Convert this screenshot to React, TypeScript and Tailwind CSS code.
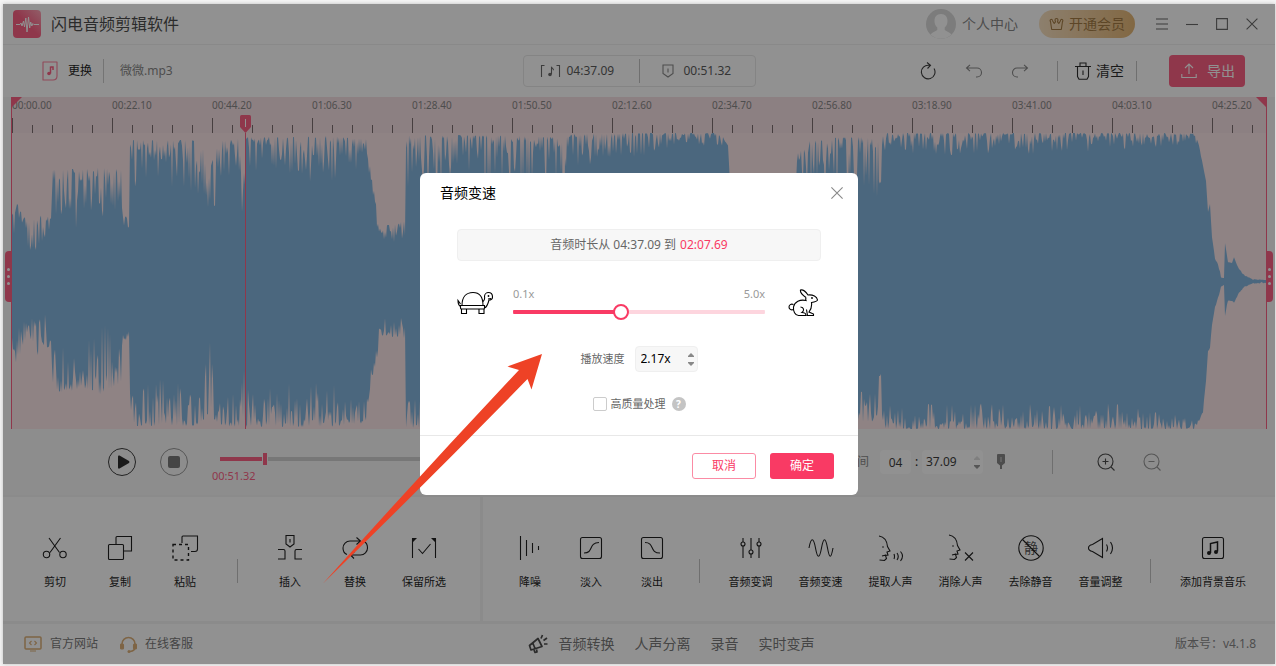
import { useState, type ReactNode } from 'react'

const TIMES = [
  '00:00.00', '00:22.10', '00:44.20', '01:06.30', '01:28.40', '01:50.50', '02:12.60',
  '02:34.70', '02:56.80', '03:18.90', '03:41.00', '04:03.10', '04:25.20',
]

const PLAYHEAD = 51.32
const PX_PER_SECOND = 100 / 22.1

// x, top, bottom, jitter of the top edge, jitter of the bottom edge
const ENVELOPE: [number, number, number, number, number][] = [
  [0, 82, 212, 22, 40],
  [4, 68, 232, 34, 40],
  [16, 90, 200, 24, 24],
  [26, 82, 222, 26, 40],
  [39, 84, 212, 14, 16],
  [41, 36, 262, 34, 36],
  [70, 36, 256, 50, 44],
  [90, 34, 262, 50, 56],
  [109, 36, 250, 36, 36],
  [111, 84, 208, 10, 10],
  [117, 82, 206, 10, 8],
  [118, 7, 293, 36, 32],
  [180, 7, 293, 44, 44],
  [190, 12, 290, 38, 32],
  [197, 34, 280, 60, 60],
  [208, 8, 293, 30, 34],
  [228, 5, 294, 30, 32],
  [231, 20, 290, 70, 50],
  [234, 4, 294, 28, 34],
  [318, 3, 294, 38, 36],
  [354, 6, 290, 22, 24],
  [358, 32, 256, 28, 28],
  [364, 70, 232, 20, 18],
  [368, 94, 202, 16, 16],
  [393, 88, 206, 24, 24],
  [394, 2, 295, 44, 26],
  [472, 2, 295, 50, 28],
  [546, 4, 293, 46, 26],
  [550, 8, 292, 40, 28],
  [551, 96, 200, 8, 8],
  [552, 96, 200, 8, 8],
  [553, 1, 295, 26, 20],
  [620, 0, 295, 22, 16],
  [655, 0, 295, 12, 12],
  [708, 0, 295, 10, 12],
  [716, 10, 286, 6, 8],
  [718, 50, 240, 10, 10],
  [722, 104, 190, 8, 8],
  [782, 104, 190, 8, 8],
  [785, 10, 286, 30, 26],
  [826, 4, 292, 50, 30],
  [866, 4, 288, 46, 30],
  [867, 46, 244, 20, 14],
  [869, 50, 242, 10, 8],
  [870, 0, 296, 18, 18],
  [960, 0, 296, 17, 20],
  [1100, 0, 296, 15, 20],
  [1183, 0, 296, 8, 10],
  [1187, 12, 288, 1, 2],
  [1191, 32, 280, 2, 2],
  [1194, 48, 248, 2, 2],
  [1196, 79, 218, 1, 2],
  [1198, 71, 216, 1, 2],
  [1200, 104, 192, 1, 1],
  [1203, 125, 175, 1, 2],
  [1207, 133, 162, 3, 2],
  [1209, 144, 154, 1, 1],
  [1212, 145, 152, 0, 0],
  [1213, 110, 183, 0, 0],
  [1216, 129, 168, 2, 2],
  [1220, 130, 168, 1, 1],
  [1222, 124, 170, 1, 2],
  [1227, 136, 160, 1, 1],
  [1233, 142, 154, 1, 1],
  [1240, 146, 151, 1, 1],
  [1254, 147, 150, 0, 1],
]

function wavePath() {
  let seed = 11
  const rand = () => {
    seed = (seed * 16807) % 2147483647
    return seed / 2147483647
  }
  const top: string[] = []
  const bottom: string[] = []
  for (let i = 0; i < ENVELOPE.length - 1; i++) {
    const a = ENVELOPE[i]
    const b = ENVELOPE[i + 1]
    for (let x = a[0]; x < b[0]; x++) {
      const k = (x - a[0]) / (b[0] - a[0])
      const at = (n: number) => a[n] + (b[n] - a[n]) * k
      const up = at(1) + at(3) * 1.3 * rand() ** 2.4
      const down = at(2) - at(4) * 1.3 * rand() ** 2.4
      top.push(`${x} ${up.toFixed(1)}`)
      bottom.unshift(`${x} ${down.toFixed(1)}`)
    }
  }
  return `M${top.join('L')}L1254 147L1254 150L${bottom.join('L')}Z`
}

const WAVE = wavePath()

function Icon({ w = 28, h = 28, className = '', children }: { w?: number; h?: number; className?: string; children: ReactNode }) {
  return (
    <svg
      width={w}
      height={h}
      viewBox={`0 0 ${w} ${h}`}
      fill="none"
      stroke="currentColor"
      strokeWidth="1.1"
      aria-hidden="true"
      className={`shrink-0 ${className}`}
    >
      {children}
    </svg>
  )
}

function Tool({ label, width = 'w-16', children }: { label: string; width?: string; children: ReactNode }) {
  return (
    <button className={`flex shrink-0 flex-col items-center gap-2 whitespace-nowrap text-[11px] leading-4 text-black ${width}`}>
      <Icon w={28} h={28}>{children}</Icon>
      <span className="pt-1">{label}</span>
    </button>
  )
}

function Steps({ small = false }: { small?: boolean }) {
  return (
    <span className="flex flex-col gap-[5px] text-[#888]">
      <button aria-label="增加" className={small ? 'opacity-30' : ''}>
        <svg width="6" height="4" viewBox="0 0 6 4" fill="currentColor"><path d="M3 0 6 3V4H0V3Z" /></svg>
      </button>
      <button aria-label="减少">
        <svg width="6" height="4" viewBox="0 0 6 4" fill="currentColor"><path d="M3 4 6 1V0H0V1Z" /></svg>
      </button>
    </span>
  )
}

function TitleBar() {
  return (
    <header className="flex h-[41px] items-center border-b border-[#efefef] pl-[10px] pr-[17px]">
      <svg width="28" height="28" viewBox="0 0 28 28" aria-hidden="true">
        <defs>
          <linearGradient id="logo" x1="1" y1="0" x2="0" y2="1">
            <stop offset="0" stopColor="#ff98ac" />
            <stop offset="0.5" stopColor="#fb4a73" />
          </linearGradient>
        </defs>
        <rect width="28" height="28" rx="4" fill="url(#logo)" />
        <path d="M3 14.5h4l1-1.5 1 3 1.5-5 1 6 1.3-9 1.2 14 1.5-15 1.2 11 1-6 1.1 4 1-2.5 1 1H26" fill="none" stroke="#fff" strokeWidth="1" />
      </svg>
      <h1 className="ml-[10px] text-base leading-6 text-[#333]">闪电音频剪辑软件</h1>
      <div className="ml-auto flex items-center">
        <a href="#user" className="flex items-center gap-[6px] text-sm text-[#777]">
          <svg width="30" height="30" viewBox="0 0 30 30" aria-hidden="true">
            <circle cx="15" cy="15" r="15" fill="#d4d4d4" />
            <path d="M15 5c4.500 0 6.500 3 6.500 7 0 3-1 5-2.800 6.500v2.500c2 1.500 5 2 6.800 4.500A15 15 0 0 1 4.500 25.500c1.800-2.500 4.800-3 6.800-4.500v-2.500C9.500 17 8.500 15 8.500 12c0-4 2-7 6.500-7Z" fill="#fff" />
          </svg>
          个人中心
        </a>
        <button className="ml-[21px] flex h-7 items-center gap-[5px] rounded-full bg-linear-to-r from-[#f6dcb8] to-[#e0ac62] px-[10px] text-sm text-[#96692a]">
          <Icon w={15} h={14}>
            <path d="M3.500 3.800 5.200 6.500 6.500 5 6 3a1.500 1.500 0 1 1 3 0L8.500 5l1.300 1.500 1.700-2.700a1.200 1.200 0 1 1 2 .7L12.300 12.500H2.700L1.500 4.500a1.200 1.200 0 1 1 2-.7" strokeLinejoin="round" />
          </Icon>
          开通会员
        </button>
        <div className="ml-[21px] flex items-center gap-[18px] text-[#555]">
          <button aria-label="菜单"><Icon w={12} h={12}><path d="M0 1h12M0 6h12M0 11h12" /></Icon></button>
          <button aria-label="最小化"><Icon w={12} h={12}><path d="M0 6.500h12" /></Icon></button>
          <button aria-label="最大化"><Icon w={12} h={12}><path d="M.6.6h10.800v10.800H.6z" /></Icon></button>
          <button aria-label="关闭"><Icon w={12} h={12}><path d="m.6.6 10.800 10.800m0-10.800L.6 11.400" /></Icon></button>
        </div>
      </div>
    </header>
  )
}

function Toolbar() {
  return (
    <div className="grid h-[52px] grid-cols-[1fr_auto_1fr] items-center">
      <div className="flex items-center pl-[39px] text-xs">
        <button className="flex items-center gap-[10px] text-black">
          <Icon w={16} h={20} className="text-[#fb4a73]">
            <path d="M1 1h14v14q0 4-4 4H1z" strokeLinejoin="round" opacity=".8" />
            <path d="M8.500 12.500V5.500M8.500 6h2.500v3" strokeWidth="1.500" />
            <circle cx="7" cy="12.500" r="1.800" fill="currentColor" stroke="none" />
          </Icon>
          更换
        </button>
        <span className="ml-[11px] mr-4 h-6 w-px bg-[#c4c4c4]" />
        <span className="text-[#777]">微微.mp3</span>
      </div>

      <div className="flex h-8 items-center rounded border border-[#e4e4e4] text-xs text-[#444]">
        <span className="flex w-[115px] items-center gap-[6px] pl-4">
          <Icon w={21} h={14} className="text-[#555]">
            <path d="M1.500 13V1M1.500 1.500h3M19.500 13V1M19.500 1.500h-3" />
            <path d="M11.500 10V3.500c1 1 2 1 2 2.800" />
            <circle cx="10" cy="10.500" r="1.800" fill="currentColor" stroke="none" />
          </Icon>
          04:37.09
        </span>
        <span className="h-6 w-px bg-[#bbb]" />
        <span className="flex w-[115px] items-center gap-[10px] pl-[22px]">
          <Icon w={12} h={14} className="text-[#777]">
            <path d="M1 1h10v8.500L6 13 1 9.500ZM6 4.500v4" />
          </Icon>
          00:51.32
        </span>
      </div>

      <div className="flex items-center justify-end pr-[30px] text-sm">
        <button aria-label="重置" className="mr-[29px]">
          <Icon w={16} h={18} className="text-[#222]">
            <path d="M14 6.500A6.800 6.800 0 1 1 9 3.300h1M7 .5l3.500 2.800L7.500 6.500" />
          </Icon>
        </button>
        <button aria-label="撤销" className="mr-7">
          <Icon w={18} h={14} className="text-[#777]">
            <path d="M5 .8 1.500 4 5 7.200M1.500 4H12a4.500 4.500 0 0 1 0 9h-1" />
          </Icon>
        </button>
        <button aria-label="重做" className="mr-7">
          <Icon w={18} h={14} className="text-[#777]">
            <path d="m13 .8 3.500 3.200L13 7.200M16.500 4H6a4.500 4.500 0 0 0 0 9h1" />
          </Icon>
        </button>
        <span className="h-5 w-px bg-[#bbb]" />
        <button className="mx-3 ml-[17px] flex items-center gap-[5px] text-[#111]">
          <Icon w={16} h={18}>
            <path d="M0 4.500h16M5 4V1h6v3M2.500 5v9.500l1.500 2.800h8l1.500-2.800V5M8 8.500v4.500" />
          </Icon>
          清空
        </button>
        <span className="h-5 w-px bg-[#bbb]" />
        <button className="ml-8 flex h-8 w-[76px] items-center justify-center gap-[10px] rounded bg-[#fb4a73] pl-[2px] text-white">
          <Icon w={16} h={16}>
            <path d="M8 11V1.500M4 5l4-4 4 4M.8 11v3.500h14.400V11" />
          </Icon>
          导出
        </button>
      </div>
    </div>
  )
}

function Handle({ side }: { side: string }) {
  return (
    <span className={`absolute top-[154px] flex h-[51px] w-[7px] flex-col items-center justify-center gap-1 bg-[#fb4a73] ${side}`}>
      <i className="h-[3px] w-[3px] rounded-full bg-white" />
      <i className="h-[3px] w-[3px] rounded-full bg-white" />
      <i className="h-[3px] w-[3px] rounded-full bg-white" />
    </span>
  )
}

function Waveform() {
  return (
    <section className="bg-[#f7f7f7] px-2">
      <div className="relative border-x border-[#fb4a73] bg-[#fbe3e5]">
        <div className="flex h-9 overflow-hidden bg-[#f5dce0]">
          {TIMES.map((time) => (
            <div key={time} className="flex w-[100px] shrink-0 flex-col justify-between">
              <span className="text-[10px] leading-4 text-[#777]">{time}</span>
              <span className="flex items-end">
                <i className="mr-[19px] h-[15px] w-px bg-[#6a5a5c]" />
                <i className="mr-[19px] h-2 w-px bg-[#6a5a5c]" />
                <i className="mr-[19px] h-2 w-px bg-[#6a5a5c]" />
                <i className="mr-[19px] h-2 w-px bg-[#6a5a5c]" />
                <i className="mr-[19px] h-2 w-px bg-[#6a5a5c]" />
              </span>
            </div>
          ))}
        </div>
        <svg viewBox="0 0 1254 296" preserveAspectRatio="none" className="block h-[296px] w-full" aria-label="波形">
          <path d={WAVE} fill="#72aad8" />
        </svg>

        <svg width="10" height="10" className="absolute left-0 top-0"><path d="M0 0h10L0 10z" fill="#fb4a73" /></svg>
        <svg width="10" height="10" className="absolute right-0 top-0"><path d="M0 0h10v10z" fill="#fb4a73" /></svg>
        <Handle side="-left-[7px] rounded-l" />
        <Handle side="-right-[7px] rounded-r" />

        <div
          className="absolute bottom-0 top-[18px] flex w-[11px] -translate-x-[5px] flex-col items-center"
          style={{ left: Math.round(PLAYHEAD * PX_PER_SECOND) + 1 }}
        >
          <svg width="11" height="18" viewBox="0 0 11 18" className="shrink-0">
            <path d="M0 1.500Q0 0 1.500 0h8Q11 0 11 1.500V12l-5.500 6L0 12Z" fill="#fb4a73" />
            <path d="M5.500 4v8" stroke="#fff" />
          </svg>
          <i className="w-px flex-1 bg-[#fb4a73]" />
        </div>
      </div>
    </section>
  )
}

function Player() {
  return (
    <section className="flex h-[66px] items-start bg-[#f7f7f7] pl-[105px] pr-[114px] pt-[19px] text-xs">
      <button aria-label="播放" className="mr-6 flex h-7 w-7 shrink-0 items-center justify-center rounded-full border border-[#222]">
        <svg width="12" height="14" viewBox="0 0 12 14" className="ml-[3px]">
          <path d="M1.500.5 11 6q1 1 0 2L1.500 13.500Q0 14 0 12.500v-11Q0 0 1.500.5Z" fill="#111" />
        </svg>
      </button>
      <button aria-label="停止" className="mr-8 flex h-7 w-7 shrink-0 items-center justify-center rounded-full border border-[#888]">
        <span className="h-3 w-3 rounded-xs bg-[#666]" />
      </button>
      <div className="mt-[5px] w-[237px] shrink-0">
        <input
          type="range"
          aria-label="播放进度"
          min={0}
          max={277}
          defaultValue={50}
          className="block h-3 w-full appearance-none bg-[linear-gradient(to_right,#fb4a73_18%,#cbcbcb_18%)] bg-[length:100%_4px] bg-center bg-no-repeat [&::-webkit-slider-thumb]:h-3 [&::-webkit-slider-thumb]:w-[6px] [&::-webkit-slider-thumb]:appearance-none [&::-webkit-slider-thumb]:border-x [&::-webkit-slider-thumb]:border-[#f7f7f7] [&::-webkit-slider-thumb]:bg-[#fb4a73]"
        />
        <div className="-mx-2 mt-[3px] flex justify-between text-[11px] leading-4">
          <span className="text-[#fb4a73]">00:51.32</span>
          <span className="text-[#777]">04:37.09</span>
        </div>
      </div>
      <div className="ml-auto flex h-7 items-center">
        <label htmlFor="minutes" className="mr-[11px] text-[#777]">时间</label>
        <input id="minutes" defaultValue="04" className="h-6 w-[31px] rounded bg-white text-center text-xs text-[#222]" />
        <span className="w-[11px] text-center">:</span>
        <span className="flex h-6 w-[61px] items-center justify-between rounded bg-white pl-1 pr-[3px]">
          <input aria-label="秒" defaultValue="37.09" className="w-10 bg-transparent text-xs text-[#222]" />
          <Steps small />
        </span>
        <button aria-label="标记" className="ml-[14px]">
          <svg width="8" height="16" viewBox="0 0 8 16"><path d="M0 1Q0 0 1 0h6q1 0 1 1v8l-3 2.500V15H3v-3.500L0 9Z" fill="#777" /><path d="M4 3v5" stroke="#ccc" /></svg>
        </button>
        <span className="ml-[47px] h-6 w-px bg-[#bbb]" />
        <button aria-label="放大" className="ml-11">
          <Icon w={18} h={18} className="text-[#333]"><circle cx="8.500" cy="8.500" r="7.500" /><path d="m14 14 3.500 3.500M8.500 5.500v6M5.500 8.500h6" /></Icon>
        </button>
        <button aria-label="缩小" className="ml-7">
          <Icon w={18} h={18} className="text-[#888]"><circle cx="8.500" cy="8.500" r="7.500" /><path d="m14 14 3.500 3.500M5.500 8.500h6" /></Icon>
        </button>
      </div>
    </section>
  )
}

function Tools() {
  return (
    <section className="flex border-b-[3px] border-t-2 border-[#f2f2f2] bg-white">
      <div className="flex h-[124px] w-[477px] shrink-0 items-center gap-px pl-5 pt-[6px]">
        <Tool label="剪切">
          <path d="M8 4 18.500 18.500M19.500 4 9 18.500" />
          <circle cx="5.500" cy="20.500" r="3.200" />
          <circle cx="22" cy="20.500" r="3.200" />
        </Tool>
        <Tool label="复制">
          <path d="M10 10V3.500Q10 2.500 11 2.500H25.500V17H18" />
          <rect x="2.500" y="10.500" width="15" height="15" rx="1" />
        </Tool>
        <Tool label="粘贴">
          <path d="M11 9V3Q11 2 12 2H26.500V15Q26.500 17.500 24 17.500H20" />
          <rect x="2" y="10.500" width="15.500" height="15.500" strokeWidth="1.400" strokeDasharray="3 3" />
        </Tool>
        <i className="mx-[19px] mt-[18px] h-6 w-px bg-[#bbb]" />
        <Tool label="插入">
          <path d="M10 1.500h8v8.500l-4 3-4-3ZM14 5v3.500M2 15.500h5.500q1.500 0 1.500 1.500v8H2M26 15.500h-5.500q-1.500 0-1.500 1.500v8h7" />
        </Tool>
        <Tool label="替换">
          <path d="M6 20.500Q2 19 2 14a7 7 0 0 1 7-7h10M15.500 3.500 19.500 7l-4 3.500M23 7.500Q26.500 9 26.500 14a7 7 0 0 1-7 7H10M13.500 17.500 9.500 21l3.500 3.500" />
        </Tool>
        <Tool label="保留所选" width="w-[72px]">
          <path d="M2.500 24V4.500M25.500 24V4.500M8.500 15l4 4.500 8-9.500" />
          <path d="M2 4h5l-5 5ZM26 4h-5l5 5Z" fill="currentColor" stroke="none" />
        </Tool>
      </div>
      <i className="w-[3px] shrink-0 bg-[#f2f2f2]" />
      <div className="flex h-[124px] min-w-0 flex-1 items-center gap-px overflow-hidden pl-[17px] pt-[6px]">
        <Tool label="降噪" width="w-[60px]">
          <path d="M4.500 2v24M10.500 6v16M16.500 9v10M22.500 12v4" />
        </Tool>
        <Tool label="淡入" width="w-[60px]">
          <rect x="3.500" y="3.500" width="21" height="21" rx="2" />
          <path d="M7 19c10 0 4-10 15-10.500" />
        </Tool>
        <Tool label="淡出" width="w-[60px]">
          <rect x="3.500" y="3.500" width="21" height="21" rx="2" />
          <path d="M7 8.500c10 0 4 10.500 15 10.500" />
        </Tool>
        <i className="ml-4 mr-[15px] mt-[18px] h-6 w-px bg-[#bbb]" />
        <Tool label="音频变调" width="w-[69px]">
          <path d="M6 4v4M6 12v12M14 4v12M14 20v4M22 4v4M22 12v12" />
          <circle cx="6" cy="10" r="2" /><circle cx="14" cy="18" r="2" /><circle cx="22" cy="10" r="2" />
        </Tool>
        <Tool label="音频变速" width="w-[69px]">
          <path d="M2 14C4 3 6.500 3 8.500 14s4 11 6 0 4-11 6 0 3.500 11 5.500 0" />
        </Tool>
        <Tool label="提取人声" width="w-[69px]">
          <path d="M2 2c6 1 8 5 8.500 10.500L13 17l-3 1 1 3-2.500.5 1 3-2 2-5-.500M5 22l4-1M17 20q1 2.500 0 5M20 19q2.500 3.500 0 7M23.500 17.500q4 4.500 0 9.500" />
          <circle cx="6" cy="13" r=".8" fill="currentColor" stroke="none" />
        </Tool>
        <Tool label="消除人声" width="w-[69px]">
          <path d="M2 1c6 1 8 5 8.500 10.500L13 16l-3 1 1 3-2.500.5 1 3-2 2-5-.500M5 21l4-1M18 18.500l8 8M26 18.500l-8 8" />
          <circle cx="6" cy="12" r=".8" fill="currentColor" stroke="none" />
        </Tool>
        <Tool label="去除静音" width="w-[69px]">
          <circle cx="14" cy="14" r="12.200" />
          <text x="7" y="19" fontSize="14" fill="#444" stroke="none">静</text>
          <path d="m5.500 5.500 17 17" />
        </Tool>
        <Tool label="音量调整" width="w-[69px]">
          <path d="M1.500 14c0-2.500 1.500-3 4-3.500l10-6v19l-10-6c-2.500-.500-4-1-4-3.500ZM19.500 10.500q2 3.500 0 7M23.500 8q4 6 0 12" />
        </Tool>
        <i className="ml-[14px] mr-[21px] mt-[18px] h-6 w-px bg-[#bbb]" />
        <Tool label="添加背景音乐" width="w-20">
          <rect x="3.500" y="3.500" width="21" height="21" rx="2" />
          <path d="M11.500 19V9.500l7-1.500v9.500" strokeWidth="1.500" />
          <circle cx="10" cy="19" r="2" fill="currentColor" stroke="none" />
          <circle cx="17" cy="18" r="2" fill="currentColor" stroke="none" />
        </Tool>
      </div>
    </section>
  )
}

function Footer() {
  return (
    <footer className="grid h-10 grid-cols-[1fr_auto_1fr] items-center text-xs text-[#666]">
      <div className="flex items-center pl-[21px]">
        <a href="#site" className="flex items-center gap-2">
          <Icon w={18} h={16} className="text-[#d8a566]">
            <rect x="1" y="1" width="16" height="12" rx="1" strokeWidth="1.500" />
            <path d="M7.500 5 5.500 7l2 2M10.500 5l2 2-2 2M6 15h6" />
          </Icon>
          官方网站
        </a>
        <a href="#service" className="ml-[22px] flex items-center gap-2">
          <Icon w={17} h={17} className="text-[#d8a566]">
            <path d="M2 9V8a6.500 6.500 0 0 1 13 0v3q0 4-5 4.500" strokeWidth="1.500" />
            <rect x="0.500" y="8" width="3" height="5" rx="1" fill="currentColor" />
            <rect x="13.500" y="8" width="3" height="5" rx="1" fill="currentColor" />
            <circle cx="9" cy="15.500" r="1.500" fill="currentColor" stroke="none" />
          </Icon>
          在线客服
        </a>
      </div>
      <nav className="flex items-center gap-5 pl-16 text-sm">
        <span className="flex items-center gap-[11px]">
          <Icon w={20} h={20} className="text-[#333]">
            <path d="M1.500 11.500 10 4.500l4 8-11 3.500ZM5 9.500l2 5M6 16l1 2.500 2-.5-.5-2.500M13 4.500 14.500 1M15.500 6.500 19 4M16 10h3.500" strokeWidth="1.700" strokeLinejoin="round" />
          </Icon>
          <a href="#convert">音频转换</a>
        </span>
        <a href="#split">人声分离</a>
        <a href="#record">录音</a>
        <a href="#voice">实时变声</a>
      </nav>
      <span className="pr-[19px] text-right text-[#777]">版本号：v4.1.8</span>
    </footer>
  )
}

function Turtle() {
  return (
    <Icon w={36} h={24} className="text-black">
      <path d="M5 14.500C5 6 9 1.500 16 1.500S26 6 26 14.500M3.500 14.500h24v2.500q0 1-1 1H4.500q-1 0-1-1ZM3.500 15.500Q1 14 1 9.500L3.500 13" />
      <path d="M26 10.500c2-1.500 2-2.500 1.500-5C27.500 3 29.500 1.500 31.500 1.500c2.500 0 4 2 4 4.500 0 2-1 3-3.500 3-1 4-2 7-4.500 8" />
      <path d="M4.500 18v4.500h5V18M22 18v4.500h5V18" />
      <circle cx="31.500" cy="5" r=".9" fill="currentColor" stroke="none" />
      <path d="m31 8 3-.5" />
    </Icon>
  )
}

function Rabbit() {
  return (
    <Icon w={30} h={28} className="text-black">
      <path d="M18 8.500C14.500 6 12 3 12.500 1c2.500-.5 5.500 2 7.500 5 5-.5 9 1.500 9.500 5 0 1.500-2.500 2-6 2.500.5 3.500-.5 7-2.500 9.500l4.500 2v1.500h-7" />
      <path d="M18 8.500c-.5 1.500-.5 2 0 3C12 10 6.500 13 5.500 18c-.5 4 1.500 8.500 5 8.500H18c0-2-1.500-3-4-3 2.500-2 2-5-1.500-5.500" />
      <path d="M5.500 15.500C3 14.500 1 16 1 18s2 3.500 4.500 2.500M18.500 20.500l1 6" />
      <circle cx="24" cy="9" r=".9" fill="currentColor" stroke="none" />
    </Icon>
  )
}

function SpeedDialog() {
  const [speed, setSpeed] = useState(2.17)

  return (
    <div role="dialog" aria-label="音频变速" className="flex w-[438px] flex-col rounded-md bg-white">
      <div className="flex h-10 items-center justify-between pl-5 pr-[15px]">
        <h2 className="text-sm text-black">音频变速</h2>
        <button aria-label="关闭对话框"><Icon w={12} h={12} className="text-[#888]"><path d="m.4.4 11.200 11.200m0-11.200L.4 11.600" /></Icon></button>
      </div>

      <div className="flex flex-col items-center px-[37px] pt-4">
        <p className="flex h-8 w-full items-center justify-center gap-1 rounded border border-[#efefef] bg-[#f7f7f7] text-xs text-[#666]">
          <span>音频时长从 04:37.09 到</span>
          <span className="text-[#f93a64]">02:07.69</span>
        </p>

        <div className="mt-[25px] flex w-full items-center">
          <Turtle />
          <div className="ml-5 flex-1">
            <div className="flex justify-between text-[11px] leading-4 text-[#999]">
              <span>0.1x</span>
              <span>5.0x</span>
            </div>
            <input
              type="range"
              aria-label="速度"
              min={0.1}
              max={5}
              step={0.01}
              value={speed}
              onChange={(e) => setSpeed(Number(e.target.value))}
              className="mt-[2px] block h-4 w-full appearance-none rounded-full bg-[linear-gradient(to_right,#f93a64_42%,#fdd5de_42%)] bg-[length:100%_4px] bg-center bg-no-repeat [&::-webkit-slider-thumb]:h-4 [&::-webkit-slider-thumb]:w-4 [&::-webkit-slider-thumb]:appearance-none [&::-webkit-slider-thumb]:rounded-full [&::-webkit-slider-thumb]:border-2 [&::-webkit-slider-thumb]:border-[#f93a64] [&::-webkit-slider-thumb]:bg-white"
            />
          </div>
          <span className="ml-[23px] mr-[3px]"><Rabbit /></span>
        </div>

        <div className="mt-[26px] flex items-center">
          <label htmlFor="speed" className="mr-[10px] text-[11px] text-[#666]">播放速度</label>
          <span className="flex h-[26px] w-[63px] items-center justify-between rounded border border-[#efefef] bg-[#f7f7f7] pl-[5px] pr-[3px]">
            <input id="speed" readOnly value={`${speed}x`} className="w-10 bg-transparent text-xs text-black" />
            <Steps />
          </span>
        </div>

        <div className="mb-[23px] mt-6 flex h-4 items-center text-[11px] text-[#666]">
          <input id="quality" type="checkbox" className="h-[14px] w-[14px] appearance-none rounded-xs border border-[#ccc] bg-white" />
          <label htmlFor="quality" className="ml-1">高质量处理</label>
          <button aria-label="帮助" className="ml-[6px] flex h-[14px] w-[14px] items-center justify-center rounded-full bg-[#c4c4c4] text-[10px] font-bold leading-[14px] text-white">?</button>
        </div>
      </div>

      <div className="flex h-[60px] items-center justify-end gap-[14px] border-t border-[#e8e8e8] pr-6 text-xs">
        <button className="h-[26px] w-16 rounded-[3px] border border-[#fb8ba4] text-[#f93a64]">取消</button>
        <button className="h-[26px] w-16 rounded-[3px] bg-[#f93a64] text-white">确定</button>
      </div>
    </div>
  )
}

export default function App() {
  return (
    <div className="min-h-screen bg-[#f5f5f5] pb-[2px] pl-[3px] pr-px pt-1 font-['Noto_Sans','Noto_Sans_CJK_SC',sans-serif]">
      <div className="relative overflow-hidden bg-white shadow-[0_0_4px_#bbb]">
        <TitleBar />
        <Toolbar />
        <Waveform />
        <Player />
        <Tools />
        <Footer />

        <div className="absolute inset-0 flex items-center justify-center bg-[#242424]/50">
          <SpeedDialog />
        </div>

        <svg width="222" height="232" viewBox="0 0 222 232" className="pointer-events-none absolute left-[320px] top-[350px]" aria-hidden="true">
          <path d="M219 0 184.500 12.500l11.500 3.500Q98 120 0 229.500Q104 128 204.500 25l4 10.500Z" fill="#ee4226" />
        </svg>
      </div>
    </div>
  )
}
